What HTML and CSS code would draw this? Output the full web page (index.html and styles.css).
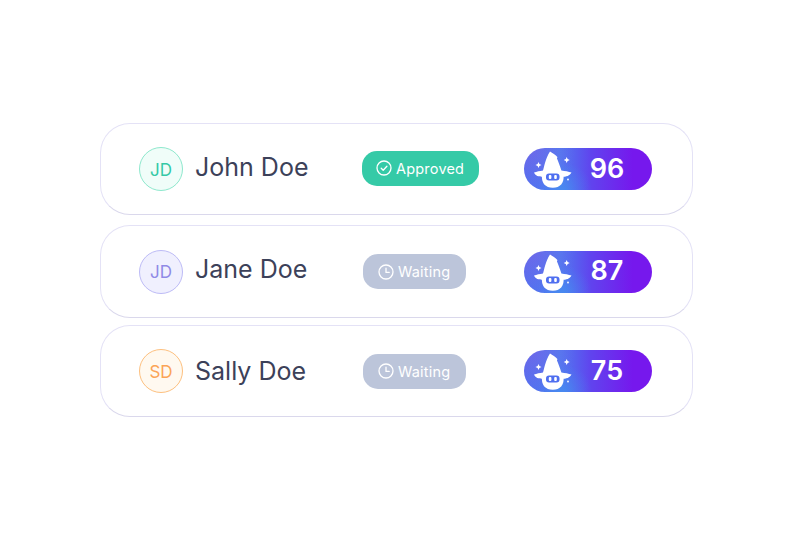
FILE: index.html
```html
<!DOCTYPE html>
<html>
<head>
    <title>Scores</title>
    <link rel="stylesheet" href="styles.css">
</head>
<body>
    <svg class="defs" width="0" height="0">
        <symbol id="wizard" viewBox="0 0 40 38">
            <path fill="#fff" d="M10 19.5 C11.5 14.5 12.5 7.5 17 0.6 C19.5 2 22.5 3.8 24.6 6.2 C24 6.5 23.8 6.9 24 7.6 C25.5 11 27 15.5 28.4 19.5 C32 20 35.5 20.6 38.5 21.6 C37 24.8 33 26 29 26 L10 26 C6 26 2 24.8 1 21.6 C3.5 20.6 7 20 10 19.5 Z"/>
            <path fill="#fff" d="M9 24 H30.5 C31.5 32 27 36.8 19.8 36.8 C12.5 36.8 8 32 9 24 Z"/>
            <rect x="13" y="22.5" width="13.5" height="7" rx="3" fill="#4f6ff0"/>
            <rect x="15.8" y="24" width="2.6" height="4" rx="1" fill="#fff"/>
            <rect x="21.2" y="24" width="2.6" height="4" rx="1" fill="#fff"/>
            <path fill="#fff" d="M5.5 11 L6.4 13.1 L8.5 14 L6.4 14.9 L5.5 17 L4.6 14.9 L2.5 14 L4.6 13.1 Z"/>
            <path fill="#fff" d="M33.7 6 L34.6 8.1 L36.7 9 L34.6 9.9 L33.7 12 L32.8 9.9 L30.7 9 L32.8 8.1 Z"/>
            <circle cx="35" cy="28.5" r="0.9" fill="#fff"/>
        </symbol>
        <symbol id="check" viewBox="0 0 16 16">
            <circle cx="8" cy="8" r="7" fill="none" stroke="#fff" stroke-width="1.3"/>
            <path d="M5.2 8.2 L7.2 10.2 L10.9 6.2" fill="none" stroke="#fff" stroke-width="1.3" stroke-linecap="round" stroke-linejoin="round"/>
        </symbol>
        <symbol id="clock" viewBox="0 0 16 16">
            <circle cx="8" cy="8" r="7" fill="none" stroke="#fff" stroke-width="1.3"/>
            <path d="M8 4.2 V8.4 H11.2" fill="none" stroke="#fff" stroke-width="1.3" stroke-linecap="round" stroke-linejoin="round"/>
        </symbol>
    </svg>

    <div class="list">
        <div class="card first">
            <div class="person">
                <div class="avatar green">JD</div>
                <div class="name">John Doe</div>
            </div>
            <div class="status">
                <div class="badge approved">
                    <svg class="badge-icon"><use href="#check"></use></svg>
                    <span>Approved</span>
                </div>
            </div>
            <div class="score">
                <svg class="wizard"><use href="#wizard"></use></svg>
                <span class="points">96</span>
            </div>
        </div>

        <div class="card second">
            <div class="person">
                <div class="avatar purple">JD</div>
                <div class="name">Jane Doe</div>
            </div>
            <div class="status">
                <div class="badge waiting">
                    <svg class="badge-icon"><use href="#clock"></use></svg>
                    <span>Waiting</span>
                </div>
            </div>
            <div class="score">
                <svg class="wizard"><use href="#wizard"></use></svg>
                <span class="points">87</span>
            </div>
        </div>

        <div class="card">
            <div class="person">
                <div class="avatar orange">SD</div>
                <div class="name">Sally Doe</div>
            </div>
            <div class="status">
                <div class="badge waiting">
                    <svg class="badge-icon"><use href="#clock"></use></svg>
                    <span>Waiting</span>
                </div>
            </div>
            <div class="score">
                <svg class="wizard"><use href="#wizard"></use></svg>
                <span class="points">75</span>
            </div>
        </div>
    </div>
</body>
</html>
```

FILE: styles.css
```css
body {
    margin: 0;
    background-color: #fff;
    font-family: Inter, "Liberation Sans", sans-serif;
}

.defs {
    display: block;
    height: 0;
}

.list {
    width: 593px;
    margin-left: 100px;
    padding-top: 123px;
}

.card {
    display: flex;
    align-items: center;
    box-sizing: border-box;
    height: 92px;
    padding-left: 38px;
    background-color: #fff;
    border: 1px solid #e4e2f6;
    border-bottom-color: #dad8ec;
    border-radius: 30px;
}

.first {
    margin-bottom: 10px;
}

.second {
    height: 93px;
    margin-bottom: 7px;
}

.first .name {
    margin-bottom: 4px;
}

.second .name {
    margin-bottom: 6px;
}

.first .badge {
    margin-top: -2px;
}

.person {
    display: flex;
    align-items: center;
    gap: 12px;
    width: 223px;
}

.avatar {
    display: flex;
    align-items: center;
    justify-content: center;
    box-sizing: border-box;
    width: 44px;
    height: 44px;
    padding-top: 1px;
    border-radius: 50%;
    border: 1px solid;
    font-size: 17px;
}

.green {
    color: #35c9a6;
    background-color: #f0fdf9;
    border-color: #8ee8cd;
}

.purple {
    color: #8f8ae6;
    background-color: #f0f0fe;
    border-color: #bdbbf6;
}

.orange {
    color: #fba457;
    background-color: #fff9f0;
    border-color: #fdc07f;
}

.name {
    font-size: 25px;
    color: #3c4159;
}

.status {
    width: 162px;
}

.badge {
    display: inline-flex;
    align-items: center;
    gap: 4px;
    box-sizing: border-box;
    height: 35px;
    border-radius: 15px;
    color: #fff;
    font-size: 14.5px;
    letter-spacing: 0.2px;
}

.approved {
    width: 117px;
    padding-left: 14px;
    background-color: #35caa7;
}

.waiting {
    width: 103px;
    margin-left: 1px;
    padding-left: 15px;
    background-color: #bcc5da;
}

.badge-icon {
    flex: none;
    width: 16px;
    height: 16px;
}

.score {
    display: flex;
    align-items: center;
    width: 128px;
    height: 42px;
    border-radius: 21px;
    background:
        radial-gradient(circle at 6% 0%, rgba(150, 90, 225, 0.4), transparent 35%),
        radial-gradient(circle at 32% 100%, rgba(60, 160, 240, 0.45), transparent 28%),
        linear-gradient(90deg, #5170ef 0%, #4f7cf0 28%, #6044ee 52%, #7618ed 85%);
}

.wizard {
    flex: none;
    width: 40px;
    height: 38px;
    margin-left: 9px;
    margin-top: 2px;
}

.points {
    width: 68px;
    text-align: center;
    color: #fff;
    font-size: 27px;
    font-weight: 600;
    margin-bottom: 2px;
}
```
